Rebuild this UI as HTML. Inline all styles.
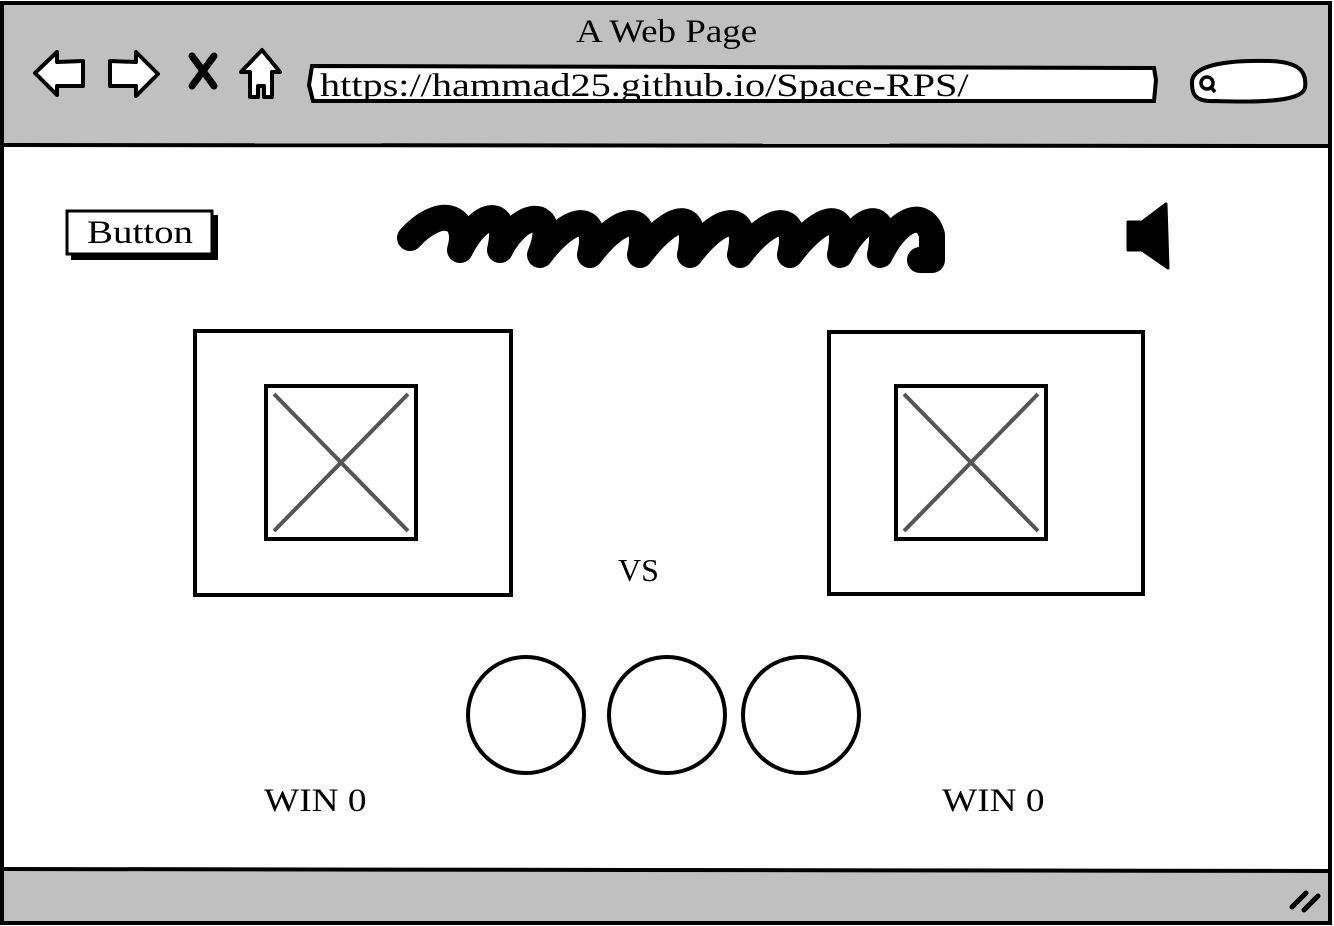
<!DOCTYPE html>
<html><head><style>
body{margin:0;width:1334px;height:926px;overflow:hidden;background:#fff;font-family:"Liberation Serif",serif;}
.a{position:absolute;white-space:nowrap;transform-origin:0 0}
</style></head><body>
<svg class="a" style="left:0;top:0" width="1334" height="926">
<rect x="2" y="3" width="1328" height="920" fill="#c0c0c0" stroke="#000" stroke-width="4"/>
<rect x="4" y="146" width="1324" height="724" fill="#fff"/>
<line x1="3" y1="145" x2="1330" y2="146" stroke="#000" stroke-width="4"/>
<line x1="3" y1="869" x2="1330" y2="871" stroke="#000" stroke-width="4"/>
<path d="M35 73 L57 52 L57 62 L83 61 L83 86 L57 86 L57 95 Z" fill="#fff" stroke="#000" stroke-width="4" stroke-linejoin="round"/>
<path d="M158 74 L136 52 L136 62 L110 61 L110 86 L136 86 L136 96 Z" fill="#fff" stroke="#000" stroke-width="4" stroke-linejoin="round"/>
<path d="M192 56 L214 86 M214 56 L192 86" stroke="#000" stroke-width="7" stroke-linecap="round"/>
<path d="M262 50 L280 72 L272 72 L272 97 L264 97 L264 86 L258 86 L258 97 L250 97 L250 72 L241 72 Z" fill="#fff" stroke="#000" stroke-width="4" stroke-linejoin="round"/>
<path d="M312 66 L1154 68 L1156 80 L1154 101 L313 101 L309 85 Z" fill="#fff" stroke="#000" stroke-width="4"/>
<path d="M1192 84 C1190 64 1230 60 1270 61 C1300 62 1307 72 1305 88 C1302 100 1270 103 1215 101 C1195 102 1192 94 1192 84 Z" fill="#fff" stroke="#000" stroke-width="4"/>
<circle cx="1207" cy="83" r="6" fill="none" stroke="#000" stroke-width="3.5"/>
<line x1="1211" y1="87" x2="1215" y2="92" stroke="#000" stroke-width="3.5"/>
<rect x="71" y="215" width="147" height="45" fill="#000"/>
<rect x="67" y="211" width="145" height="43" fill="#fff" stroke="#000" stroke-width="3"/>
<path d="M410 238 C440 205 470 215 460 250 C480 210 510 205 500 250 C520 210 560 205 540 255 C570 215 600 210 590 255 C620 215 650 210 640 255 C670 215 700 205 690 255 C720 215 750 210 740 255 C770 215 800 210 790 255 C820 215 850 205 840 255 C860 215 890 205 880 255 C900 215 925 210 932 235 L932 260 L920 260" fill="none" stroke="#000" stroke-width="26" stroke-linecap="round" stroke-linejoin="round"/>
<path d="M1128 222 L1142 222 L1166 204 L1168 268 L1142 250 L1128 250 Z" fill="#000" stroke="#000" stroke-width="3" stroke-linejoin="round"/>
<rect x="195" y="331" width="316" height="264" fill="#fff" stroke="#000" stroke-width="4"/>
<rect x="829" y="332" width="314" height="262" fill="#fff" stroke="#000" stroke-width="4"/>
<rect x="266" y="386" width="150" height="153" fill="#fff" stroke="#000" stroke-width="4"/>
<path d="M274 394 L408 531 M408 394 L274 531" stroke="#555" stroke-width="4"/>
<rect x="896" y="386" width="150" height="153" fill="#fff" stroke="#000" stroke-width="4"/>
<path d="M904 394 L1038 531 M1038 394 L904 531" stroke="#555" stroke-width="4"/>
<circle cx="526" cy="715" r="58" fill="#fff" stroke="#000" stroke-width="4"/>
<circle cx="667" cy="715" r="58" fill="#fff" stroke="#000" stroke-width="4"/>
<circle cx="801" cy="715" r="58" fill="#fff" stroke="#000" stroke-width="4"/>
<path d="M1292 907 L1306 893 M1304 910 L1318 896" stroke="#000" stroke-width="5" stroke-linecap="round"/>
</svg>
<div class="a" style="left:576px;top:14px;font-size:33px;transform:scaleX(1.12)">A Web Page</div>
<div class="a" style="left:320px;top:66px;font-size:33px;line-height:40px;transform:scaleX(1.22)">https://hammad25.github.io/Space-RPS/</div>
<div class="a" style="left:87px;top:213px;font-size:33px;line-height:40px;transform:scaleX(1.18)">Button</div>
<div class="a" style="left:618px;top:552px;font-size:32px">VS</div>
<div class="a" style="left:264px;top:783px;font-size:33px;transform:scaleX(1.13)">WIN 0</div>
<div class="a" style="left:942px;top:783px;font-size:33px;transform:scaleX(1.13)">WIN 0</div>
</body></html>
